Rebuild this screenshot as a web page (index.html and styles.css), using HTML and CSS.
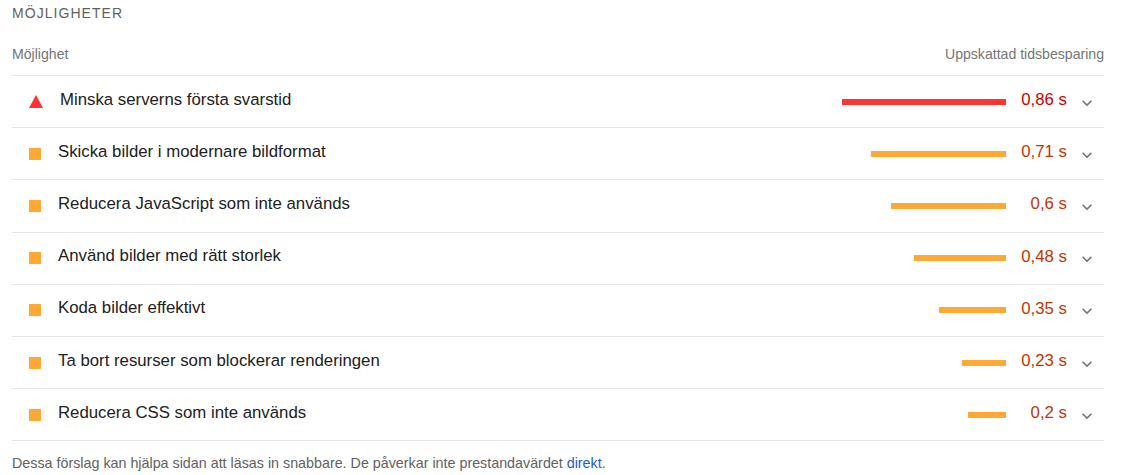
FILE: index.html
```html
<!DOCTYPE html>
<html lang="sv">
<head>
<meta charset="utf-8">
<title>Möjligheter</title>
<link rel="stylesheet" href="styles.css">
</head>
<body>
<section class="section">
  <div class="title">Möjligheter</div>
  <div class="header">
    <span>Möjlighet</span>
    <span>Uppskattad tidsbesparing</span>
  </div>
  <div class="row">
    <span class="icon tri"></span>
    <span class="label">Minska serverns första svarstid</span>
    <span class="bar fail" style="width:164px"></span>
    <span class="value fail-text">0,86 s</span>
    <span class="chev"><svg width="20" height="20" viewBox="0 0 24 24"><path d="M16.59 8.59L12 13.17 7.41 8.59 6 10l6 6 6-6z" fill="#757575"/></svg></span>
  </div>
  <div class="row">
    <span class="icon sq"></span>
    <span class="label">Skicka bilder i modernare bildformat</span>
    <span class="bar avg" style="width:135px"></span>
    <span class="value avg-text">0,71 s</span>
    <span class="chev"><svg width="20" height="20" viewBox="0 0 24 24"><path d="M16.59 8.59L12 13.17 7.41 8.59 6 10l6 6 6-6z" fill="#757575"/></svg></span>
  </div>
  <div class="row">
    <span class="icon sq"></span>
    <span class="label">Reducera JavaScript som inte används</span>
    <span class="bar avg" style="width:115px"></span>
    <span class="value avg-text">0,6 s</span>
    <span class="chev"><svg width="20" height="20" viewBox="0 0 24 24"><path d="M16.59 8.59L12 13.17 7.41 8.59 6 10l6 6 6-6z" fill="#757575"/></svg></span>
  </div>
  <div class="row">
    <span class="icon sq"></span>
    <span class="label">Använd bilder med rätt storlek</span>
    <span class="bar avg" style="width:92px"></span>
    <span class="value avg-text">0,48 s</span>
    <span class="chev"><svg width="20" height="20" viewBox="0 0 24 24"><path d="M16.59 8.59L12 13.17 7.41 8.59 6 10l6 6 6-6z" fill="#757575"/></svg></span>
  </div>
  <div class="row">
    <span class="icon sq"></span>
    <span class="label">Koda bilder effektivt</span>
    <span class="bar avg" style="width:67px"></span>
    <span class="value avg-text">0,35 s</span>
    <span class="chev"><svg width="20" height="20" viewBox="0 0 24 24"><path d="M16.59 8.59L12 13.17 7.41 8.59 6 10l6 6 6-6z" fill="#757575"/></svg></span>
  </div>
  <div class="row">
    <span class="icon sq"></span>
    <span class="label">Ta bort resurser som blockerar renderingen</span>
    <span class="bar avg" style="width:44px"></span>
    <span class="value avg-text">0,23 s</span>
    <span class="chev"><svg width="20" height="20" viewBox="0 0 24 24"><path d="M16.59 8.59L12 13.17 7.41 8.59 6 10l6 6 6-6z" fill="#757575"/></svg></span>
  </div>
  <div class="row">
    <span class="icon sq"></span>
    <span class="label">Reducera CSS som inte används</span>
    <span class="bar avg" style="width:38px"></span>
    <span class="value avg-text">0,2 s</span>
    <span class="chev"><svg width="20" height="20" viewBox="0 0 24 24"><path d="M16.59 8.59L12 13.17 7.41 8.59 6 10l6 6 6-6z" fill="#757575"/></svg></span>
  </div>
  <p class="footer">Dessa förslag kan hjälpa sidan att läsas in snabbare. De påverkar inte prestandavärdet <a href="#">direkt</a>.</p>
</section>
</body>
</html>
```
FILE: styles.css
```css
* { box-sizing: border-box; }
body {
  margin: 0;
  background: #fff;
  font-family: "Liberation Sans", Arial, sans-serif;
  color: #212121;
}
.section {
  padding: 5px 17px 0 12px;
}
.title {
  font-size: 14px;
  line-height: 16px;
  letter-spacing: 1.05px;
  text-transform: uppercase;
  color: #616161;
}
.header {
  display: flex;
  justify-content: space-between;
  margin-top: 25px;
  font-size: 14.1px;
  line-height: 16px;
  color: #757575;
  padding-bottom: 13px;
  border-bottom: 1px solid #e6e6e6;
}
.row {
  display: flex;
  align-items: center;
  height: 52.2px;
  border-bottom: 1px solid #e6e6e6;
  font-size: 16.8px;
}
.icon {
  margin-left: 17px;
  margin-right: 17px;
  flex: none;
}
.sq {
  width: 12px;
  height: 12px;
  background: #ffa834;
}
.tri {
  width: 0;
  height: 0;
  border-left: 7px solid transparent;
  border-right: 7px solid transparent;
  border-bottom: 13px solid #ff3333;
}
.label {
  flex: 1;
  margin-top: -4px;
}
.bar {
  height: 6px;
  flex: none;
}
.bar.fail { background: #ff3333; }
.bar.avg { background: #ffa834; }
.value {
  width: 61px;
  text-align: right;
  flex: none;
  font-size: 16.8px;
  margin-top: -3px;
}
.fail-text { color: #cc0000; }
.avg-text { color: #c33300; }
.chev {
  width: 37px;
  display: flex;
  justify-content: flex-end;
  padding-right: 7px;
  padding-top: 2px;
}
.footer {
  margin: 12px 0 0;
  font-size: 14.3px;
  line-height: 20px;
  color: #616161;
}
.footer a {
  color: #1a5cd8;
  text-decoration: none;
}
```
